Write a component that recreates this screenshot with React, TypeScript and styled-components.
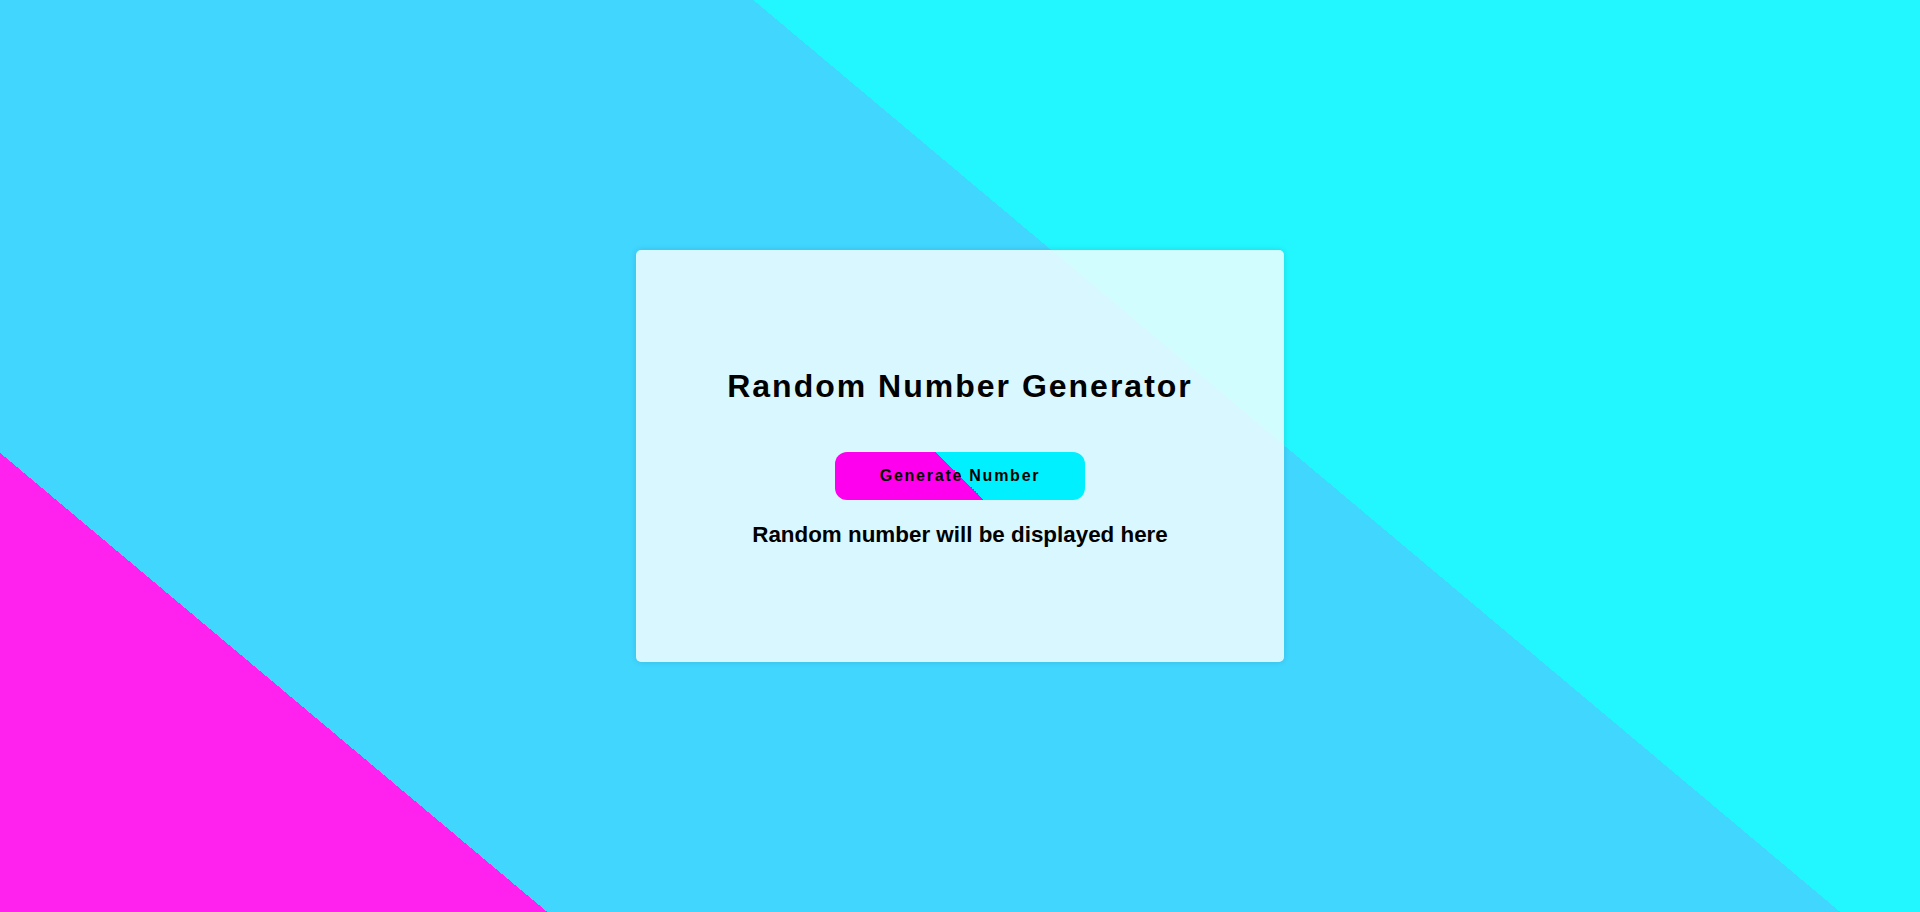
import React, { useState } from "react";
import styled, { createGlobalStyle } from "styled-components";

const GlobalStyle = createGlobalStyle`
  html, body {
    margin: 0;
    padding: 0;
    height: 100%;
  }
  body {
    font-family: "Liberation Sans", Arial, sans-serif;
  }
  * {
    box-sizing: border-box;
  }
`;

const Page = styled.div`
  min-height: 100vh;
  display: flex;
  align-items: center;
  justify-content: center;
  background: linear-gradient(
    40deg,
    #ff22ee 18.2%,
    #40d6fe 18.2%,
    #40d6fe 61.2%,
    #22f6ff 61.2%
  );
`;

const Card = styled.div`
  width: 648px;
  height: 412px;
  padding-top: 118px;
  display: flex;
  flex-direction: column;
  align-items: center;
  justify-content: flex-start;
  background: rgba(255, 255, 255, 0.8);
  border-radius: 5px;
  box-shadow: 0 0 6px rgba(0, 0, 0, 0.12);
`;

const Title = styled.h1`
  margin: 0 0 47.4px;
  font-size: 32px;
  font-weight: 700;
  letter-spacing: 2px;
  color: #000;
  line-height: normal;
`;

const GenerateButton = styled.button`
  width: 250px;
  height: 48px;
  border: none;
  border-radius: 12px;
  cursor: pointer;
  font-family: "Liberation Sans", Arial, sans-serif;
  font-size: 16px;
  font-weight: 700;
  letter-spacing: 1.75px;
  color: #000;
  padding: 0;
  background: linear-gradient(45deg, #ff00ee 50%, #00f0ff 50%);
`;

const Result = styled.p`
  margin: 21.7px 0 0;
  font-size: 22.4px;
  font-weight: 700;
  color: #000;
  line-height: normal;
`;

export default function App() {
  const [value, setValue] = useState<number | null>(null);
  return (
    <>
      <GlobalStyle />
      <Page>
        <Card>
          <Title>Random Number Generator</Title>
          <GenerateButton onClick={() => setValue(Math.floor(Math.random() * 100) + 1)}>
            Generate Number
          </GenerateButton>
          <Result>
            {value === null ? "Random number will be displayed here" : `Random number: ${value}`}
          </Result>
        </Card>
      </Page>
    </>
  );
}
